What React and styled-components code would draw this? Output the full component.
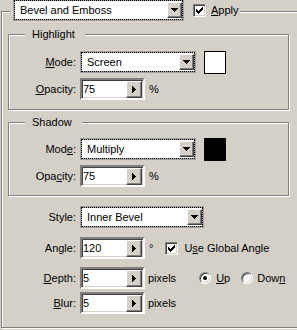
import React from 'react';
import styled, { createGlobalStyle } from 'styled-components';

const GlobalStyle = createGlobalStyle`
  html, body {
    margin: 0;
    padding: 0;
  }
  body {
    width: 297px;
    height: 330px;
    overflow: hidden;
    background: #d4d0c8;
    font-family: "Liberation Sans", Arial, sans-serif;
    font-size: 11px;
    color: #000;
  }
`;

const Panel = styled.div`
  width: 297px;
  height: 330px;
  overflow: hidden;
  padding-top: 11px;
  box-sizing: border-box;
`;

const OuterGroup = styled.div`
  margin-left: 1px;
  width: 298px;
  height: 317px;
  box-sizing: border-box;
  border: 1px solid #808080;
  box-shadow: inset 1px 1px #fff, 1px 1px #fff;
`;

const Header = styled.div`
  display: flex;
  align-items: center;
  width: fit-content;
  margin: -13px 0 0 8px;
  padding: 0 1px 0 3px;
  background: #d4d0c8;
`;

const Group = styled.div`
  margin: ${p => p.$top}px 0 0 6px;
  width: 281px;
  box-sizing: border-box;
  border: 1px solid #808080;
  box-shadow: inset 1px 1px #fff, 1px 1px #fff;
  padding-bottom: ${p => p.$bottom}px;
`;

const GroupTitle = styled.div`
  width: fit-content;
  margin: -7px 0 0 16px;
  padding: 0 10px 0 7px;
  line-height: 13px;
  background: #d4d0c8;
`;

const Section = styled.div`
  margin-left: 7px;
`;

const Row = styled.div`
  display: flex;
  align-items: center;
  height: 22px;
  margin-top: ${p => p.$top}px;
`;

const Label = styled.span`
  width: 67px;
  margin-right: 4px;
  text-align: right;
  white-space: nowrap;
`;

const Text = styled.span`
  margin-left: ${p => p.$left || 0}px;
  white-space: nowrap;
`;

const SelectBox = styled.div`
  width: ${p => p.$w}px;
  height: 22px;
  box-sizing: border-box;
  border: 2px solid #a0a0a0;
  outline: 1px dotted #000;
  outline-offset: -2px;
  background: #fff;
  display: flex;
  align-items: center;
  justify-content: space-between;
  padding: 0 0 0 5px;
`;

const ArrowButton = styled.div`
  width: 15px;
  height: 16px;
  box-sizing: border-box;
  background: #d4d0c8;
  border: 1px solid;
  border-color: #fff #404040 #404040 #fff;
  box-shadow: inset -1px -1px #808080;
  display: flex;
  align-items: center;
  justify-content: center;
`;

const Field = styled.div`
  width: 65px;
  height: 22px;
  box-sizing: border-box;
  display: flex;
  align-items: center;
  justify-content: space-between;
  background: #fff;
  border: 2px solid;
  border-color: #808080 #fff #fff #808080;
  box-shadow: inset 1px 1px #404040, inset -1px -1px #d4d0c8;
  padding: 0 1px 0 1px;
`;

const SpinButton = styled(ArrowButton)`
  width: 16px;
  height: 17px;
`;

const Swatch = styled.div`
  width: 22px;
  height: 23px;
  box-sizing: border-box;
  margin-left: 8px;
  border: 1px solid #000;
  background: ${p => p.$color};
`;

const Box = styled.span`
  flex: none;
  width: 13px;
  height: 13px;
  box-sizing: border-box;
  margin-left: ${p => p.$left || 0}px;
  margin-right: ${p => p.$right || 0}px;
  border: 1px solid;
  border-color: #808080 #fff #fff #808080;
  box-shadow: inset 1px 1px #404040, inset -1px -1px #d4d0c8;
  background: #fff;
  display: inline-flex;
  align-items: center;
  justify-content: center;
`;

const RadioCircle = styled(Box)`
  width: 12px;
  height: 12px;
  border-radius: 50%;
`;

const Dot = styled.span`
  width: 4px;
  height: 4px;
  border-radius: 50%;
  background: #000;
`;

const Down = () => (
  <svg width="7" height="4" viewBox="0 0 7 4" shapeRendering="crispEdges">
    <path d="M0 0h7v1H0zM1 1h5v1H1zM2 2h3v1H2zM3 3h1v1H3z" fill="#000" />
  </svg>
);

const Right = () => (
  <svg width="4" height="7" viewBox="0 0 4 7" shapeRendering="crispEdges">
    <path d="M0 0h1v7H0zM1 1h1v5H1zM2 2h1v3H2zM3 3h1v1H3z" fill="#000" />
  </svg>
);

const Tick = () => (
  <svg width="7" height="7" viewBox="0 0 7 7" shapeRendering="crispEdges">
    <path d="M0 2h1v3H0zM1 3h1v3H1zM2 4h1v3H2zM3 3h1v3H3zM4 2h1v3H4zM5 1h1v3H5zM6 0h1v3H6z" fill="#000" />
  </svg>
);

const Select = ({ width, value }) => (
  <SelectBox $w={width}>
    <span>{value}</span>
    <ArrowButton><Down /></ArrowButton>
  </SelectBox>
);

const Spin = ({ value }) => (
  <Field>
    <span>{value}</span>
    <SpinButton><Right /></SpinButton>
  </Field>
);

const Check = ({ left, right }) => (
  <Box $left={left} $right={right}><Tick /></Box>
);

const Radio = ({ checked, left, right }) => (
  <RadioCircle $left={left} $right={right}>{checked && <Dot />}</RadioCircle>
);

const BlendGroup = ({ title, top, first, bottom, mode, color, modeLabel, opacityLabel }) => (
  <Group $top={top} $bottom={bottom}>
    <GroupTitle>{title}</GroupTitle>
    <Row $top={first}>
      <Label>{modeLabel}</Label>
      <Select width={116} value={mode} />
      <Swatch $color={color} />
    </Row>
    <Row $top={5}>
      <Label>{opacityLabel}</Label>
      <Spin value="75" />
      <Text $left={4}>%</Text>
    </Row>
  </Group>
);

export default function App() {
  return (
    <>
      <GlobalStyle />
      <Panel>
        <OuterGroup>
          <Header>
            <Select width={171} value="Bevel and Emboss" />
            <Check left={9} right={5} />
            <Text><u>A</u>pply</Text>
          </Header>

          <BlendGroup
            title="Highlight"
            top={13}
            first={10}
            bottom={9}
            mode="Screen"
            color="#fff"
            modeLabel={<><u>M</u>ode:</>}
            opacityLabel={<><u>O</u>pacity:</>}
          />
          <BlendGroup
            title="Shadow"
            top={12}
            first={9}
            bottom={8}
            mode="Multiply"
            color="#000"
            modeLabel={<>Mod<u>e</u>:</>}
            opacityLabel={<>Opa<u>c</u>ity:</>}
          />

          <Section>
            <Row $top={10}>
              <Label>Style:</Label>
              <Select width={124} value="Inner Bevel" />
            </Row>
            <Row $top={9}>
              <Label>Angle:</Label>
              <Spin value="120" />
              <Text $left={4}>°</Text>
              <Check left={12} right={6} />
              <Text>U<u>s</u>e Global Angle</Text>
            </Row>
            <Row $top={8}>
              <Label><u>D</u>epth:</Label>
              <Spin value="5" />
              <Text $left={3}>pixels</Text>
              <Radio checked left={23} right={5} />
              <Text><u>U</u>p</Text>
              <Radio left={11} right={4} />
              <Text>Dow<u>n</u></Text>
            </Row>
            <Row $top={3}>
              <Label><u>B</u>lur:</Label>
              <Spin value="5" />
              <Text $left={3}>pixels</Text>
            </Row>
          </Section>
        </OuterGroup>
      </Panel>
    </>
  );
}
